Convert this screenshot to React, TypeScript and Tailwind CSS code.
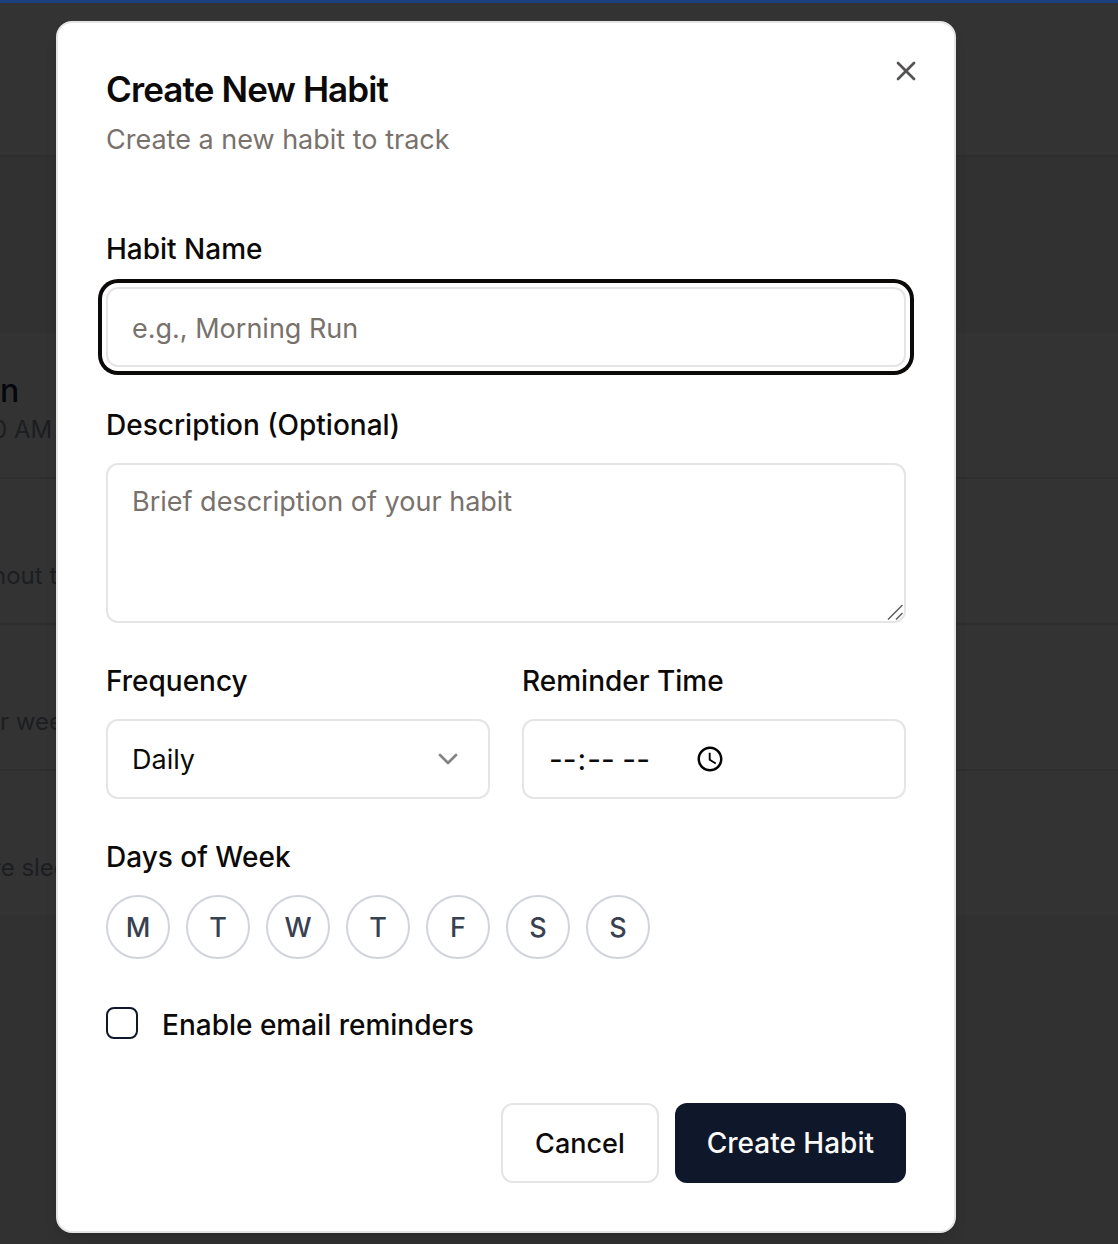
import React, { useState } from "react";
import { ChevronDown, X } from "lucide-react";

const box =
  "block w-full rounded-[12px] border-2 border-[#e5e5e5] bg-white px-6 leading-10 text-[#0c0a09] outline-none placeholder:text-[#78716c]";

function Field({ id, label, children }: { id: string; label: string; children: React.ReactNode }) {
  return (
    <div className="flex min-w-0 flex-col gap-[14px]">
      <div className="text-[32px] leading-[50px]">
        <label htmlFor={id} className="text-[28px] leading-none font-medium">
          {label}
        </label>
      </div>
      {children}
    </div>
  );
}

function HabitRow({ title, children }: { title?: string; children: React.ReactNode }) {
  return (
    <div className="flex h-[146px] flex-col justify-end border-b-2 border-[#2e2e2e] bg-[#333333] pb-[29px] whitespace-nowrap last:border-[#313131]">
      {title && <p className="text-[32px] leading-[42px] font-medium text-[#06070c]">{title}</p>}
      {children}
    </div>
  );
}

function Backdrop() {
  return (
    <div aria-hidden="true" className="col-start-1 row-start-1 flex min-w-0 flex-col overflow-hidden bg-[#313131]">
      <div className="h-[3px] bg-[#1a4080]" />
      <div className="h-[154px] border-b-2 border-[#2e2e2e] bg-[#333333]" />
      <div className="h-[176px]" />
      <HabitRow title="n">
        <p className="-ml-2 text-[24px] leading-9 text-[#1c1e21]">0 AM</p>
      </HabitRow>
      <HabitRow>
        <p className="-ml-2 text-[24px] leading-9 text-[#1c1e21]">hout t</p>
      </HabitRow>
      <HabitRow>
        <p className="text-[24px] leading-9 text-[#1c1e21]">r wee</p>
      </HabitRow>
      <HabitRow>
        <p className="-ml-2 text-[24px] leading-9 text-[#1c1e21]">re slee</p>
      </HabitRow>
    </div>
  );
}

const days = [
  ["Monday", "M"],
  ["Tuesday", "T"],
  ["Wednesday", "W"],
  ["Thursday", "T"],
  ["Friday", "F"],
  ["Saturday", "S"],
  ["Sunday", "S"],
];

export default function App() {
  const [picked, setPicked] = useState<string[]>([]);
  const toggle = (day: string) =>
    setPicked((now) => (now.includes(day) ? now.filter((d) => d !== day) : [...now, day]));

  return (
    <div className="grid min-h-screen grid-cols-1 font-['Inter',sans-serif] text-[#0c0a09]">
      <Backdrop />
      <div className="z-10 col-start-1 row-start-1 px-14 pt-[21px] pb-[11px]">
        <div
          role="dialog"
          aria-labelledby="dialog-title"
          className="relative w-full max-w-[900px] rounded-[16px] border-2 border-[#e5e5e5] bg-white p-12 shadow-lg"
        >
          <h2 id="dialog-title" className="text-[35px] leading-9 font-semibold tracking-tight">
            Create New Habit
          </h2>
          <p className="mt-3 text-[27px] leading-[42px] text-[#78716c]">Create a new habit to track</p>
          <button type="button" aria-label="Close" className="absolute top-8 right-8 opacity-70">
            <X size={32} />
          </button>

          <form onSubmit={(e) => e.preventDefault()}>
            <div className="mt-[62px] flex flex-col gap-8">
              <Field id="name" label="Habit Name">
                <input
                  id="name"
                  type="text"
                  placeholder="e.g., Morning Run"
                  className={`${box} h-20 pt-0.5 text-[27px] ring-4 ring-[#0c0a09] ring-offset-4 ring-offset-white`}
                />
              </Field>

              <Field id="description" label="Description (Optional)">
                <div className="relative">
                  <textarea
                    id="description"
                    placeholder="Brief description of your habit"
                    className={`${box} h-40 resize-none py-[17px] text-[27px]`}
                  />
                  <svg
                    aria-hidden="true"
                    width="16"
                    height="16"
                    viewBox="0 0 16 16"
                    className="pointer-events-none absolute right-[3px] bottom-[3px]"
                    fill="none"
                    stroke="#5c5c5c"
                    strokeWidth="1.5"
                  >
                    <path d="M1 15.5L15.5 1M9 15.5L15.5 9" />
                  </svg>
                </div>
              </Field>

              <div className="grid grid-cols-2 gap-8">
                <Field id="frequency" label="Frequency">
                  <div className="relative">
                    <select id="frequency" className={`${box} h-20 appearance-none pt-0.5 text-[27px]`}>
                      <option>Daily</option>
                      <option>Weekly</option>
                    </select>
                    <ChevronDown
                      size={32}
                      className="pointer-events-none absolute top-6 right-[26px] opacity-50"
                    />
                  </div>
                </Field>
                <Field id="time" label="Reminder Time">
                  <input
                    id="time"
                    type="time"
                    className={`${box} h-20 text-[30px] [&::-webkit-calendar-picker-indicator]:size-[30px] [&::-webkit-datetime-edit]:w-[147px] [&::-webkit-datetime-edit]:flex-none`}
                  />
                </Field>
              </div>

              <fieldset className="flex flex-col">
                <legend className="mb-[14px] text-[32px] leading-[50px]">
                  <span className="text-[28px] leading-none font-medium">Days of Week</span>
                </legend>
                <div className="flex flex-wrap gap-4">
                  {days.map(([day, letter]) => (
                    <button
                      key={day}
                      type="button"
                      aria-label={day}
                      aria-pressed={picked.includes(day)}
                      onClick={() => toggle(day)}
                      className="flex size-16 items-center justify-center rounded-full border-2 border-[#d1d5db] pt-0.5 text-[27px] leading-10 font-medium text-[#374151] aria-pressed:bg-[#0f172a] aria-pressed:text-white"
                    >
                      {letter}
                    </button>
                  ))}
                </div>
              </fieldset>

              <div className="flex h-16 items-center gap-6">
                <input
                  id="email"
                  type="checkbox"
                  className="size-8 appearance-none rounded-[8px] border-2 border-[#0f172a] checked:bg-[#0f172a]"
                />
                <div className="pt-0.5 text-[32px] leading-[50px]">
                  <label htmlFor="email" className="text-[28px] leading-none font-medium">
                    Enable email reminders
                  </label>
                </div>
              </div>
            </div>

            <div className="mt-12 flex justify-end gap-4">
              <button
                type="button"
                className="h-20 rounded-[12px] border-2 border-[#e5e5e5] bg-white px-8 pt-0.5 text-[27px] leading-10 font-medium"
              >
                Cancel
              </button>
              <button
                type="submit"
                className="h-20 rounded-[12px] bg-[#0f172a] px-8 text-[28px] leading-10 font-medium text-[#fafaf9]"
              >
                Create Habit
              </button>
            </div>
          </form>
        </div>
      </div>
    </div>
  );
}
